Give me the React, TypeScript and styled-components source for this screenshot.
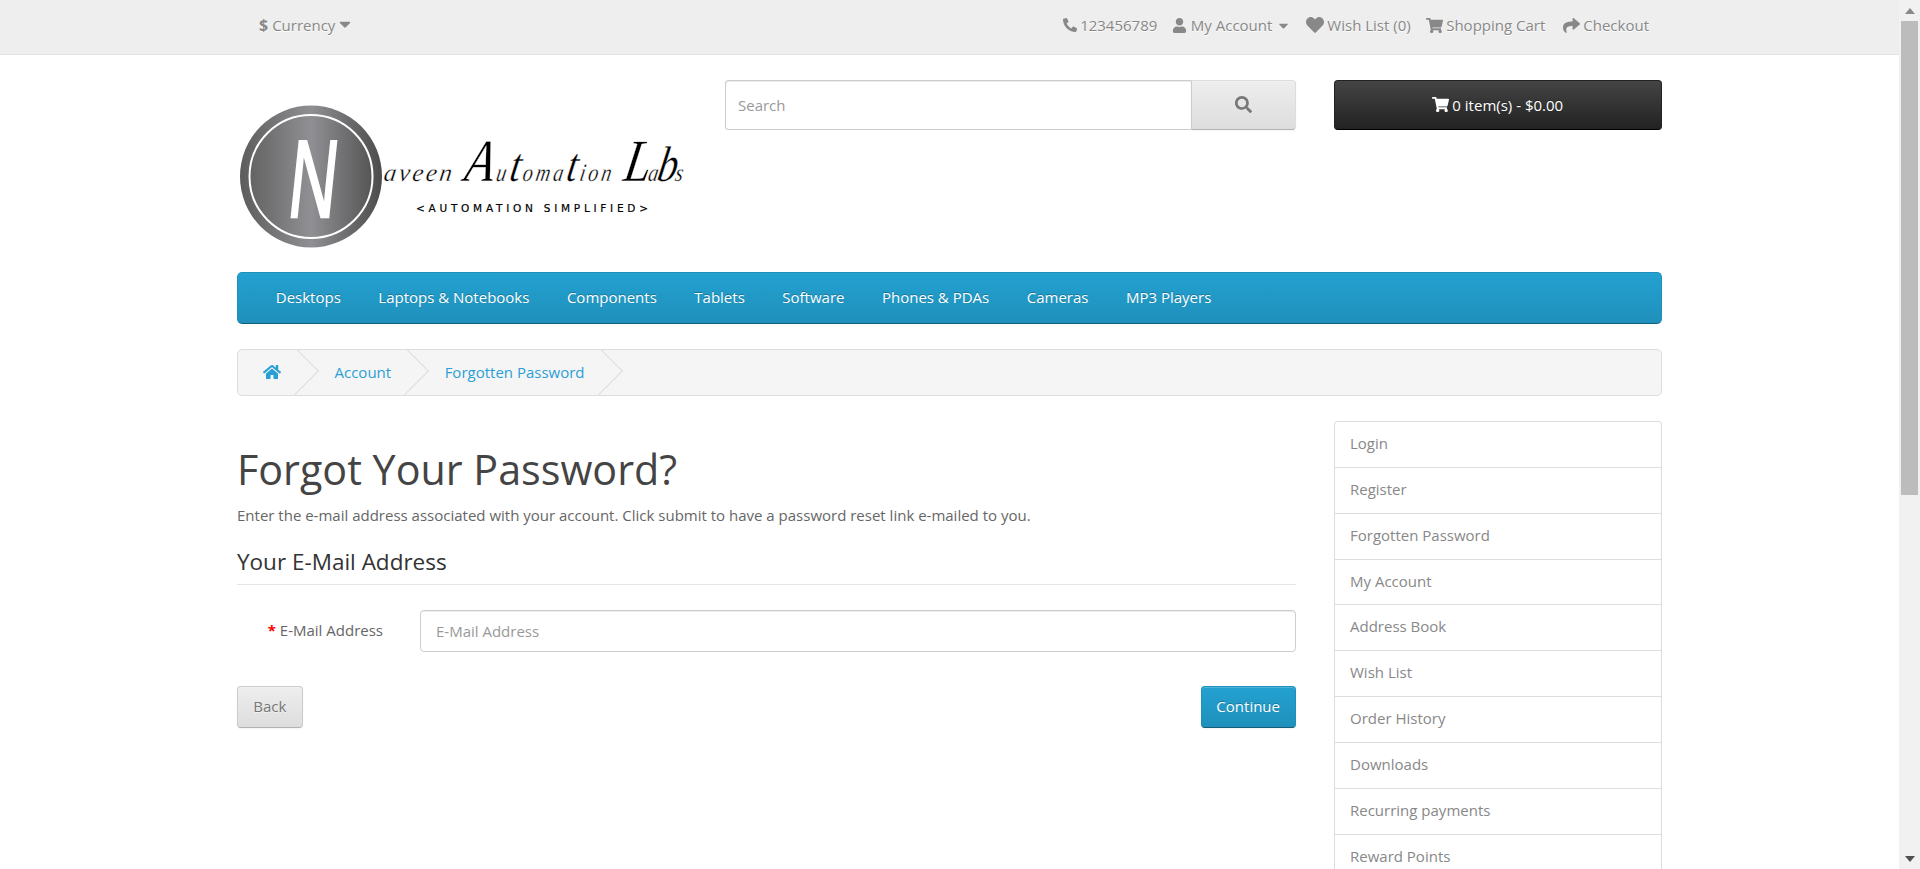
import React from "react";
import styled, { createGlobalStyle } from "styled-components";
import { FaPhone, FaUser, FaHeart, FaShoppingCart, FaShare, FaSearch, FaHome, FaCaretDown } from "react-icons/fa";

const Global = createGlobalStyle`
  html, body { margin: 0; padding: 0; height: 869px; overflow: hidden; background: #fff; }
  body { font-family: "Open Sans", sans-serif; font-size: 15px; line-height: 25px; color: #666; }
  * { box-sizing: border-box; }
`;

const Shell = styled.div`display: flex; height: 869px; overflow: hidden;`;
const PageArea = styled.div`flex: 1; min-width: 0; height: 869px; overflow: hidden;`;
const Container = styled.div`width: 1425px; margin: 0 auto;`;

const TopBar = styled.nav`
  height: 54.5px; background: #eee; border-bottom: 1px solid #e2e2e2; color: #888;
  text-shadow: 0 1px 0 #fff; font-size: 15px;
`;
const TopInner = styled(Container)`display: flex; justify-content: space-between; align-items: center; height: 50px;`;
const Currency = styled.div`display: flex; align-items: center; margin-left: 22px;`;
const DollarMark = styled.span`font-size: 16px; font-weight: 700; margin-right: 4px;`;
const CaretWrap = styled.span`display: inline-flex; margin-left: 1px; margin-top: -2px;`;
const TopLinks = styled.div`display: flex; align-items: center; margin-right: 13px; gap: 15px;`;
const TopLink = styled.span<{ $extra?: number }>`
  display: inline-flex; align-items: center; gap: 3.5px; white-space: nowrap; margin-left: ${(p) => p.$extra ?? 0}px;
`;

const Header = styled(Container)`
  display: grid; grid-template-columns: 449.5px 571px 328.5px; column-gap: 38px; margin-top: 24px; height: 193px;
`;
const LogoSvg = styled.svg`display: block; width: 450px; height: 181px; overflow: visible;`;

const SearchGroup = styled.div`display: flex; height: 50px; margin-top: 1px;`;
const SearchInput = styled.input`
  flex: 1; min-width: 0; height: 50px; padding: 0 12.5px; font: 15px "Open Sans", sans-serif; color: #555;
  border: 1.25px solid #ccc; border-right: 0; border-radius: 3.75px 0 0 3.75px; box-shadow: inset 0 1px 1px rgba(0,0,0,.075);
  &::placeholder { color: #999; opacity: 1; }
`;
const SearchButton = styled.button`
  width: 105px; height: 50px; display: flex; align-items: center; justify-content: center; color: #777;
  background: linear-gradient(#eee, #ddd); border: 1.25px solid #ddd; border-bottom-color: #b3b3b3; border-left-color: #ccc;
  border-radius: 0 3.75px 3.75px 0; box-shadow: inset 0 1px 0 rgba(255,255,255,.2), 0 1px 2px rgba(0,0,0,.05); font-size: 17px;
`;
const CartButton = styled.button`
  width: 100%; height: 50px; margin-top: 1px; display: flex; align-items: center; justify-content: center; gap: 3px;
  background: linear-gradient(#444, #222); border: 1.25px solid #222; border-bottom-color: #000; border-radius: 3.75px;
  color: #fff; font: 15px "Open Sans", sans-serif; text-shadow: 0 -1px 0 rgba(0,0,0,.25);
`;

const Menu = styled(Container)`
  display: flex; align-items: center; height: 52px; padding-left: 19px; margin-bottom: 25px;
  background: linear-gradient(#23a1d1, #1f90bb); border: 1.25px solid #1f90bb; border-bottom-color: #145e7a; border-radius: 5px;
`;
const MenuItem = styled.a`
  padding: 0 18.75px; color: #fff; font-size: 15px; text-shadow: 0 -1px 0 rgba(0,0,0,.25); white-space: nowrap;
`;

const Crumbs = styled(Container)`
  display: flex; align-items: center; gap: 3.5px; height: 47.5px; overflow: hidden; margin-bottom: 25px;
  background: #f5f5f5; border: 1.25px solid #ddd; border-radius: 5px;
`;
const Crumb = styled.a`
  position: relative; display: flex; align-items: center; height: 100%; padding: 0 25px; color: #2a9fd6; white-space: nowrap; font-size: 15px;
  &::after {
    content: ""; position: absolute; right: -6px; top: 4.5px; width: 33px; height: 33px; transform: rotate(45deg);
    border-top: 1.25px solid #ddd; border-right: 1.25px solid #ddd;
  }
`;

const Columns = styled(Container)`display: grid; grid-template-columns: 1058.5px 328px; column-gap: 38.5px;`;
const Main = styled.main`display: block;`;
const Title = styled.h1`margin: 22.5px 0 9.5px; font-size: 41.25px; line-height: 50px; font-weight: 400; color: #444;`;
const Lead = styled.p`margin: 0 0 12.5px; font-size: 15px; line-height: 25px;`;
const Fieldset = styled.div`margin-top: 17.5px;`;
const Legend = styled.div`
  font-size: 22.5px; line-height: 31px; color: #333; padding-bottom: 7px; border-bottom: 1.25px solid #e5e5e5; margin-bottom: 25px;
`;
const FormRow = styled.div`display: flex; align-items: center;`;
const Label = styled.label`width: 146px; text-align: right; color: #666; font-size: 15px; flex: none;`;
const Star = styled.span`color: #f00; font-weight: 700; margin-right: 4px;`;
const EmailInput = styled.input`
  flex: 1; height: 42.5px; margin-left: 37px; padding: 0 15px; font: 15px "Open Sans", sans-serif;
  border: 1.25px solid #ccc; border-radius: 3.75px; box-shadow: inset 0 1px 1px rgba(0,0,0,.075);
  &::placeholder { color: #999; opacity: 1; }
`;
const Actions = styled.div`display: flex; justify-content: space-between; margin-top: 33.5px;`;
const BaseButton = styled.button`
  height: 42.5px; padding: 0 14.5px 1.5px; font: 15px "Open Sans", sans-serif; border-radius: 3.75px; border: 1.25px solid;
  box-shadow: inset 0 1px 0 rgba(255,255,255,.2), 0 1px 2px rgba(0,0,0,.05);
`;
const BackButton = styled(BaseButton)`
  padding: 0 15.25px 1.5px; color: #777; text-shadow: 0 1px 0 rgba(255,255,255,.5); background: linear-gradient(#eee, #ddd);
  border-color: #ccc #ccc #b3b3b3;
`;
const ContinueButton = styled(BaseButton)`
  color: #fff; text-shadow: 0 -1px 0 rgba(0,0,0,.25); background: linear-gradient(#23a1d1, #1f90bb);
  border-color: #1f90bb #1f90bb #145e7a;
`;

const SideList = styled.aside`border: 1.25px solid #ddd; border-bottom: 0; border-radius: 3.75px 3.75px 0 0;`;
const SideItem = styled.a`
  display: block; height: 45.85px; line-height: 43.3px; padding: 0 15px; color: #888; font-size: 15px;
  border-bottom: 1.25px solid #ddd; text-shadow: 0 1px 0 #fff;
`;

const ScrollBar = styled.div`
  width: 21px; flex: none; height: 869px; background: #f1f1f1; display: flex; flex-direction: column; align-items: center; justify-content: space-between;
`;
const ArrowBox = styled.div`height: 21px; width: 21px; display: flex; align-items: center; justify-content: center;`;
const Arrow = styled.svg`width: 10px; height: 6px; display: block;`;
const ThumbTrack = styled.div`flex: 1; width: 100%; padding: 0 2px;`;
const Thumb = styled.div`height: 474px; background: #bcbcbc;`;

const scriptFont = "'Liberation Serif', serif";

const Logo = () => (
  <LogoSvg viewBox="0 0 450 181">
    <defs>
      <linearGradient id="metal" x1="0" x2="1" y1="0" y2="0">
        <stop offset="0" stopColor="#5c5c5c" />
        <stop offset="0.5" stopColor="#909094" />
        <stop offset="1" stopColor="#4c4c4c" />
      </linearGradient>
    </defs>
    <circle cx="74" cy="97.5" r="71" fill="url(#metal)" />
    <circle cx="74" cy="97.5" r="61.5" fill="none" stroke="#fff" strokeWidth="2" />
    <text transform="translate(49 138) skewX(-6)" fontFamily="'Liberation Sans', sans-serif" fontSize="110" fill="#fff" stroke="#fff" strokeWidth="2.5" textLength="48" lengthAdjust="spacingAndGlyphs">N</text>
    <g fontFamily={scriptFont} fontStyle="italic" fill="#000" stroke="#fff" strokeWidth="0.3" fontSize="25">
      <text transform="translate(146 101.5) skewX(-8)" textLength="68" lengthAdjust="spacing">aveen</text>
      <text transform="translate(226 101.5) skewX(-10) scale(0.8 1)" textLength="184" lengthAdjust="spacing">
        <tspan fontSize="60">A</tspan>u<tspan fontSize="48">t</tspan>oma<tspan fontSize="48">t</tspan>ion
      </text>
      <text transform="translate(385 101.5) skewX(-10) scale(0.8 1)" textLength="75" lengthAdjust="spacing">
        <tspan fontSize="60">L</tspan>a<tspan fontSize="50">b</tspan>s
      </text>
    </g>
    <text x="179" y="133" fontFamily="'DejaVu Sans', sans-serif" fontSize="10.5" fill="#000" stroke="#000" strokeWidth="0.2" textLength="232" lengthAdjust="spacing">&lt;AUTOMATION SIMPLIFIED&gt;</text>
  </LogoSvg>
);

const menu = ["Desktops", "Laptops & Notebooks", "Components", "Tablets", "Software", "Phones & PDAs", "Cameras", "MP3 Players"];
const side = ["Login", "Register", "Forgotten Password", "My Account", "Address Book", "Wish List", "Order History", "Downloads", "Recurring payments", "Reward Points"];

export default function App() {
  return (
    <Shell>
      <Global />
      <PageArea>
        <TopBar>
          <TopInner>
            <Currency>
              <DollarMark>$</DollarMark>
              <span>Currency</span>
              <CaretWrap><FaCaretDown size={18} /></CaretWrap>
            </Currency>
            <TopLinks>
              <TopLink><FaPhone size={14} style={{ transform: "scaleX(-1)" }} />123456789</TopLink>
              <TopLink><FaUser size={15} />My Account <FaCaretDown size={15} /></TopLink>
              <TopLink><FaHeart size={18} />Wish List (0)</TopLink>
              <TopLink><FaShoppingCart size={17} />Shopping Cart</TopLink>
              <TopLink $extra={2.5}><FaShare size={17} />Checkout</TopLink>
            </TopLinks>
          </TopInner>
        </TopBar>
        <Header>
          <Logo />
          <SearchGroup>
            <SearchInput placeholder="Search" />
            <SearchButton aria-label="Search"><FaSearch /></SearchButton>
          </SearchGroup>
          <CartButton><FaShoppingCart size={17} /> 0 item(s) - $0.00</CartButton>
        </Header>
        <Menu as="nav">
          {menu.map((m) => <MenuItem key={m}>{m}</MenuItem>)}
        </Menu>
        <Crumbs>
          <Crumb><FaHome size={18} /></Crumb>
          <Crumb>Account</Crumb>
          <Crumb>Forgotten Password</Crumb>
        </Crumbs>
        <Columns>
          <Main>
            <Title>Forgot Your Password?</Title>
            <Lead>Enter the e-mail address associated with your account. Click submit to have a password reset link e-mailed to you.</Lead>
            <Fieldset>
              <Legend>Your E-Mail Address</Legend>
              <FormRow>
                <Label><Star>*</Star>E-Mail Address</Label>
                <EmailInput placeholder="E-Mail Address" />
              </FormRow>
            </Fieldset>
            <Actions>
              <BackButton>Back</BackButton>
              <ContinueButton>Continue</ContinueButton>
            </Actions>
          </Main>
          <SideList>
            {side.map((s) => <SideItem key={s}>{s}</SideItem>)}
          </SideList>
        </Columns>
      </PageArea>
      <ScrollBar>
        <ArrowBox><Arrow viewBox="0 0 10 6"><path d="M5 0 L10 6 H0 Z" fill="#8a8a8a" /></Arrow></ArrowBox>
        <ThumbTrack><Thumb /></ThumbTrack>
        <ArrowBox><Arrow viewBox="0 0 10 6"><path d="M0 0 H10 L5 6 Z" fill="#505050" /></Arrow></ArrowBox>
      </ScrollBar>
    </Shell>
  );
}
